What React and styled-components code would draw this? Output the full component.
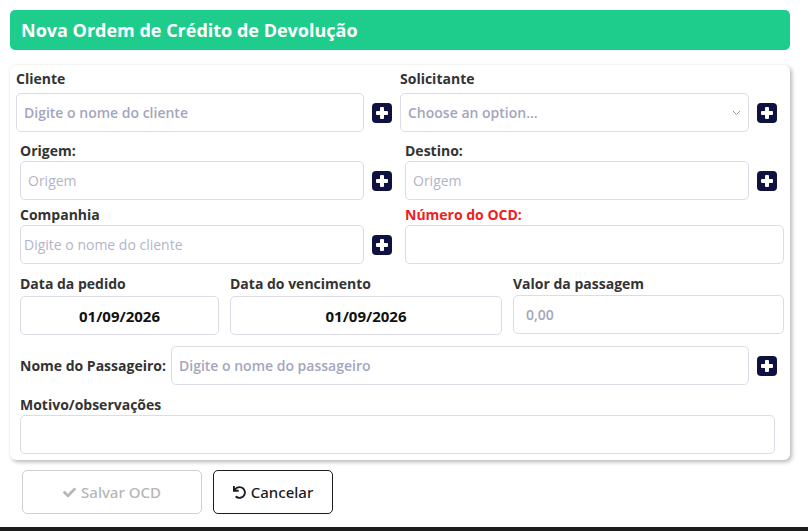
import styled, { createGlobalStyle } from "styled-components";
import { FaCheck, FaUndo } from "react-icons/fa";

const GlobalStyle = createGlobalStyle`
	html, body {
		margin: 0;
		padding: 0;
		background: #1c1c1c;
	}
	* {
		box-sizing: border-box;
	}
`;

const Page = styled.div`
	height: 527px;
	background: #fff;
	padding: 10px;
	font-family: "Open Sans", "Liberation Sans", sans-serif;
	color: #333;
`;

const Header = styled.div`
	width: 780px;
	height: 40px;
	background: #1ecd8c;
	border-radius: 5px;
	display: flex;
	align-items: center;
	padding-left: 11px;
`;

const Title = styled.h1`
	margin: 0;
	color: #fff;
	font-size: 18px;
	font-weight: 700;
	line-height: 1;
`;

const Card = styled.div`
	width: 780px;
	margin-top: 15px;
	background: #fff;
	border-radius: 6px;
	box-shadow: 2px 2px 4px rgba(0, 0, 0, 0.28), 0 0 2px rgba(0, 0, 0, 0.06);
	padding: 4px 6px 6px 10px;
	display: flex;
	flex-direction: column;
`;

const Row = styled.div`
	display: flex;
	align-items: ${(p) => p.$align || "flex-start"};
	gap: ${(p) => p.$gap || 0}px;
	margin-left: ${(p) => p.$shift || 0}px;
	margin-top: ${(p) => p.$top || 0}px;
`;

const Group = styled.div`
	width: ${(p) => p.$width}px;
	display: flex;
	flex-direction: column;
`;

const Label = styled.label`
	display: block;
	font-size: 14px;
	font-weight: 700;
	line-height: 20px;
	color: ${(p) => (p.$alert ? "#f02020" : "#333")};
	margin-bottom: ${(p) => p.$space || 0}px;
	white-space: nowrap;
`;

const InputLine = styled.div`
	display: flex;
	align-items: center;
	gap: 8px;
	width: ${(p) => (p.$width ? `${p.$width}px` : "auto")};
`;

const Input = styled.input`
	flex: 1 1 auto;
	width: 100%;
	min-width: 0;
	height: 39px;
	border: 1px solid #dcdce6;
	border-radius: 5px;
	padding: 0 7px;
	padding-left: ${(p) => (p.$indent !== undefined ? p.$indent : 7)}px;
	font-family: inherit;
	font-size: 14px;
	font-weight: ${(p) => (p.$strong ? 600 : 400)};
	color: #111;
	text-align: ${(p) => (p.$center ? "center" : "left")};
	background: #fff;
	outline: none;

	&::placeholder {
		color: ${(p) => (p.$strong ? "#a3a6bc" : "#b3b5c6")};
		opacity: 1;
	}
`;

const DateInput = styled(Input)`
	flex: none;
	font-size: 15px;
	font-weight: 700;
	color: #111;
`;

const Select = styled.div`
	flex: 1;
	height: 39px;
	border: 1px solid #dcdce6;
	border-radius: 5px;
	padding: 0 7px;
	display: flex;
	align-items: center;
	justify-content: space-between;
	font-size: 14px;
	font-weight: 600;
	color: #a3a6bc;
`;

const TextArea = styled.textarea`
	width: 755px;
	height: 39px;
	border: 1px solid #dcdce6;
	border-radius: 5px;
	resize: none;
	outline: none;
	font-family: inherit;
`;

const AddButton = styled.button`
	width: 20px;
	height: 20px;
	padding: 0;
	border: none;
	background: none;
	display: flex;
	flex-shrink: 0;
	cursor: pointer;
`;

const Actions = styled.div`
	display: flex;
	gap: 11px;
	margin-top: 10px;
	padding-left: 12px;
`;

const ActionButton = styled.button`
	width: ${(p) => p.$width}px;
	height: 44px;
	border-radius: 5px;
	background: #fff;
	border: 1px solid ${(p) => (p.disabled ? "#cfcfd4" : "#1b1b22")};
	color: ${(p) => (p.disabled ? "#b5b5bb" : "#1b1b22")};
	font-family: "Noto Sans", "Liberation Sans", sans-serif;
	font-size: 15px;
	font-weight: 500;
	display: flex;
	align-items: center;
	justify-content: center;
	gap: 5px;
	cursor: ${(p) => (p.disabled ? "default" : "pointer")};

	svg {
		font-size: 13px;
	}
`;

const PlusSquare = () => (
	<svg width="20" height="20" viewBox="0 0 20 20">
		<rect width="20" height="20" rx="4" fill="#0f1240" />
		<rect x="4" y="8" width="12" height="4" rx="1" fill="#fff" />
		<rect x="8" y="4" width="4" height="12" rx="1" fill="#fff" />
	</svg>
);

const Chevron = () => (
	<svg width="9" height="6" viewBox="0 0 9 6">
		<path d="M1 1l3.5 3.5L8 1" fill="none" stroke="#9a9aa6" strokeWidth="1" />
	</svg>
);

const Add = () => (
	<AddButton type="button">
		<PlusSquare />
	</AddButton>
);

const App = () => {
	return (
		<>
			<GlobalStyle />
			<Page>
				<Header>
					<Title>Nova Ordem de Crédito de Devolução</Title>
				</Header>
				<Card>
					<Row $gap={8} $shift={-4}>
						<Group $width={376}>
							<Label $space={4}>Cliente</Label>
							<InputLine>
								<Input $strong placeholder="Digite o nome do cliente" />
								<Add />
							</InputLine>
						</Group>
						<Group $width={377}>
							<Label $space={4}>Solicitante</Label>
							<InputLine>
								<Select>
									Choose an option...
									<Chevron />
								</Select>
								<Add />
							</InputLine>
						</Group>
					</Row>

					<Row $gap={13} $top={9}>
						<Group $width={372}>
							<Label>Origem:</Label>
							<InputLine>
								<Input placeholder="Origem" />
								<Add />
							</InputLine>
						</Group>
						<Group $width={372}>
							<Label>Destino:</Label>
							<InputLine>
								<Input placeholder="Origem" />
								<Add />
							</InputLine>
						</Group>
					</Row>

					<Row $gap={13} $top={5}>
						<Group $width={372}>
							<Label>Companhia</Label>
							<InputLine>
								<Input $indent={3} placeholder="Digite o nome do cliente" />
								<Add />
							</InputLine>
						</Group>
						<Group $width={379}>
							<Label $alert>Número do OCD:</Label>
							<InputLine>
								<Input />
							</InputLine>
						</Group>
					</Row>

					<Row $gap={11} $top={10}>
						<Group $width={199}>
							<Label $space={2}>Data da pedido</Label>
							<DateInput $center defaultValue="01/09/2026" />
						</Group>
						<Group $width={272}>
							<Label $space={2}>Data do vencimento</Label>
							<DateInput $center defaultValue="01/09/2026" />
						</Group>
						<Group $width={271}>
							<Label $space={1}>Valor da passagem</Label>
							<Input $strong $indent={12} placeholder="0,00" />
						</Group>
					</Row>

					<Row $gap={5} $top={11} $align="center">
						<Label>Nome do Passageiro:</Label>
						<InputLine $width={606}>
							<Input $strong placeholder="Digite o nome do passageiro" />
							<Add />
						</InputLine>
					</Row>

					<Row $top={10}>
						<Group $width={755}>
							<Label>Motivo/observações</Label>
							<TextArea />
						</Group>
					</Row>
				</Card>
				<Actions>
					<ActionButton $width={180} disabled>
						<FaCheck />
						Salvar OCD
					</ActionButton>
					<ActionButton $width={120}>
						<FaUndo />
						Cancelar
					</ActionButton>
				</Actions>
			</Page>
		</>
	);
};

export default App;
